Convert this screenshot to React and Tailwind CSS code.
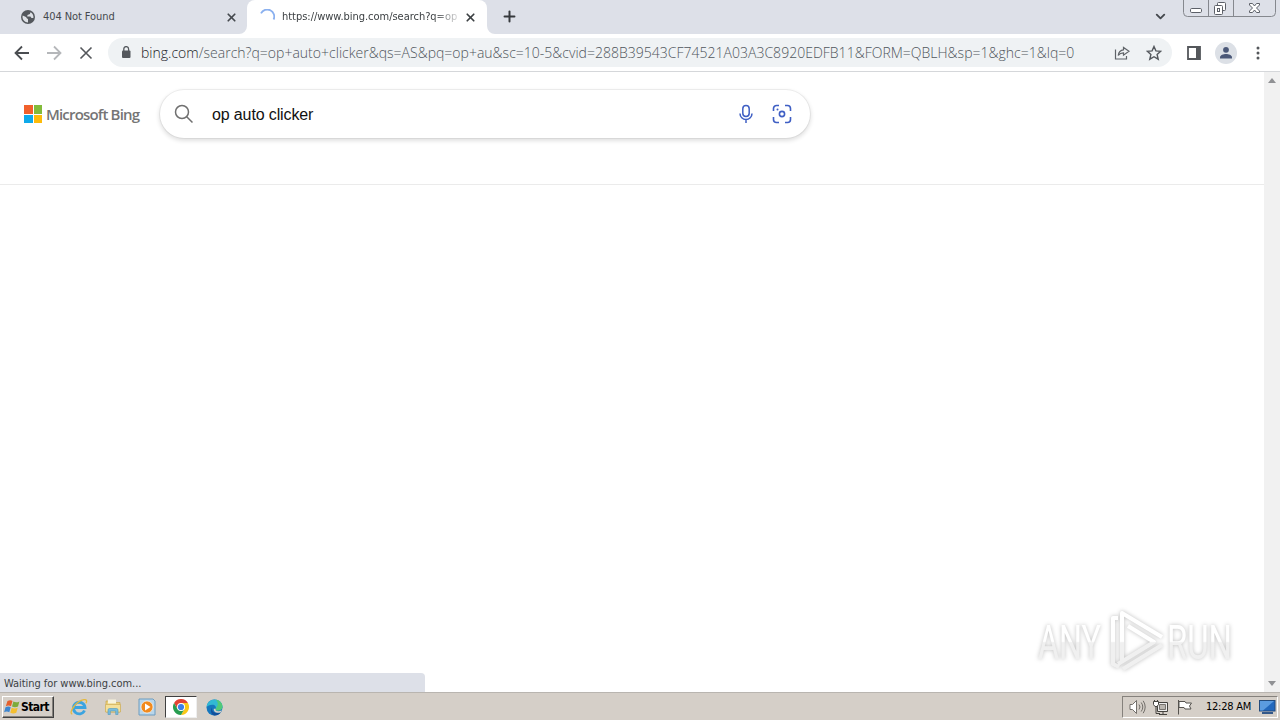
import { ChevronDown, X, Plus } from 'lucide-react';

function Globe() {
  return (
    <svg width="14" height="14" viewBox="0 0 14 14" className="shrink-0">
      <circle cx="7" cy="7" r="7" fill="#54585d" />
      <path d="M1.7 5.5 5 7l1 1.5 1 .6v3.3C4 12.2 1.5 10 1.5 7zM7.2 1.6l2.2.7-.5 1.8-2.4.8-.3 1.6h3.2l1.1 1.5h1.9c.3-2.3-.7-4.2-2.4-5.4z" fill="#dee1e6" />
    </svg>
  );
}

function TabStrip() {
  return (
    <div className="h-[34px] shrink-0 flex bg-[#dde0e8]">
      <div className="w-[247px] shrink-0 flex items-center pl-[21px] pr-[9px] text-[#45494e]">
        <Globe />
        <span className="ml-2 w-[180px] pt-px text-[11px] tracking-[-0.08px] whitespace-nowrap">
          404 Not Found
        </span>
        <X size={13} strokeWidth={3.2} className="ml-[3px] shrink-0" />
      </div>
      <div className="relative w-[240px] shrink-0 flex items-center pl-[12px] pr-[10px] bg-white rounded-t-lg text-[#3c4043]">
        <svg width="8" height="8" className="absolute bottom-0 -left-2">
          <path d="M8 0v8H0a8 8 0 0 0 8-8z" fill="#fff" />
        </svg>
        <svg width="8" height="8" className="absolute bottom-0 -right-2">
          <path d="M0 0v8h8a8 8 0 0 1-8-8z" fill="#fff" />
        </svg>
        <svg width="16" height="16" viewBox="0 0 16 16" fill="none" stroke="#8ab0ef" strokeWidth="1.8" className="shrink-0">
          <path d="M2 4.4A7 7 0 0 1 14.6 10.5" />
        </svg>
        <span className="ml-[7px] w-[176px] shrink-0 overflow-hidden pt-px text-[11px] tracking-[-0.03px] whitespace-nowrap [mask-image:linear-gradient(to_right,black_150px,transparent_182px)]">
          https://www.bing.com/search?q=op
        </span>
        <X size={13} strokeWidth={3.2} className="ml-[6px] shrink-0" />
      </div>
      <Plus size={17} strokeWidth={2.8} className="ml-[14px] mt-[8px] text-[#36393d]" />
      <ChevronDown size={15} strokeWidth={3} className="ml-auto mr-[15px] mt-[9px] text-[#45494e]" />
      <WindowButtons />
    </div>
  );
}

function WindowButtons() {
  return (
    <svg width="93" height="17" viewBox="0 0 93 17" fill="none" className="mr-[4px] shrink-0">
      <path d="M.5 0v12.5q0 4 4 4h84q4 0 4-4V0M25.5 0v16M50.5 0v16" stroke="#85888e" />
      <rect x="7.5" y="8.5" width="11" height="4" rx="1.2" fill="#fff" stroke="#5c6068" />
      <rect x="34.500" y="2.500" width="8" height="8" rx="1" fill="#fff" stroke="#5c6068" />
      <rect x="31.500" y="5.500" width="8" height="9" rx="1" fill="#fff" stroke="#5c6068" />
      <rect x="34.500" y="8.500" width="2" height="3" stroke="#5c6068" />
      <path d="M66.500 3.500h3l2 2.500 2-2.500h3v1.500l-3 3 3 3v1.500h-3l-2-2.500-2 2.500h-3V11l3-3-3-3z" fill="#fff" stroke="#5c6068" />
    </svg>
  );
}

function Toolbar() {
  return (
    <div className="h-[38px] shrink-0 flex items-center bg-white border-b border-[#d5d7da] pl-[14px] text-[#5f6368]">
      <svg width="16" height="16" viewBox="0 0 16 16" fill="none" stroke="#4a4d51" strokeWidth="1.8">
        <path d="M15 8H2M8 1.500 1.500 8 8 14.500" />
      </svg>
      <svg width="16" height="16" viewBox="0 0 16 16" fill="none" stroke="#b5b7ba" strokeWidth="1.8" className="ml-4">
        <path d="M1 8h13M8 1.500 14.500 8 8 14.500" />
      </svg>
      <svg width="16" height="16" viewBox="0 0 16 16" fill="none" stroke="#54575b" strokeWidth="1.600" className="ml-4">
        <path d="m2.500 2.500 11 11M13.500 2.500l-11 11" />
      </svg>
      <div className="ml-[14px] w-[1064px] h-[29px] rounded-full bg-[#eff2f4] flex items-center">
        <svg width="10" height="13" viewBox="0 0 10 13" className="ml-[13px] shrink-0">
          <rect x="1" y="4.500" width="8.500" height="7.500" rx="1" fill="#54585d" />
          <path d="M2.800 5V3a2.400 2.400 0 0 1 4.800 0v2" fill="none" stroke="#54585d" strokeWidth="1.3" />
        </svg>
        <span className="ml-[10px] w-[970px] whitespace-nowrap font-['Open_Sans','Noto_Sans',sans-serif] font-light text-[14px] leading-[20px] tracking-[0.013px] text-[#50565c]">
          <span className="text-[#202124]">bing.com</span>
          /search?q=op+auto+clicker&amp;qs=AS&amp;pq=op+au&amp;sc=10-5&amp;cvid=288B39543CF74521A03A3C8920EDFB11&amp;FORM=QBLH&amp;sp=1&amp;ghc=1&amp;lq=0
        </span>
        <svg width="16" height="16" viewBox="0 0 16 16" fill="none" stroke="#5f6368" strokeWidth="1.200" className="ml-[3px] shrink-0">
          <path d="M1.500 4.500v9.500h11v-3M9.500 2.500v2.300C6.500 5 4.700 7 4.200 10.500c1.500-2 3-2.600 5.300-2.600v2.300L15 6.300z" />
        </svg>
        <svg width="16" height="16" viewBox="0 0 16 16" fill="none" stroke="#54585d" strokeWidth="1.400" className="ml-4 shrink-0">
          <path d="m8 1.500 1.900 4.400 4.800.4-3.600 3.200 1.100 4.700L8 11.700l-4.200 2.500 1.100-4.700-3.600-3.200 4.800-.4z" />
        </svg>
      </div>
      <svg width="14" height="14" viewBox="0 0 14 14" className="ml-[15px] shrink-0">
        <path d="M1 1h12v12H1z" fill="none" stroke="#54575b" strokeWidth="1.800" />
        <path d="M9 1h4v12H9z" fill="#54575b" />
      </svg>
      <svg width="22" height="22" viewBox="0 0 22 22" className="ml-[14px] shrink-0">
        <circle cx="11" cy="11" r="11" fill="#dce0e6" />
        <circle cx="11" cy="7.800" r="2.900" fill="#4b5878" />
        <path d="M5 16.500v-1.200c0-2.200 3.500-3.400 6-3.400s6 1.200 6 3.400v1.200z" fill="#4b5878" />
      </svg>
      <svg width="4" height="14" viewBox="0 0 4 14" fill="#54575b" className="ml-[19px] shrink-0">
        <circle cx="2" cy="2" r="1.500" />
        <circle cx="2" cy="7" r="1.500" />
        <circle cx="2" cy="12" r="1.500" />
      </svg>
    </div>
  );
}

function BingHeader() {
  return (
    <header className="h-[113px] flex items-start border-b border-[#ebebeb] pt-[18px] pl-[24px]">
      <div className="mt-[15px] grid grid-cols-2 gap-px size-[18px]">
        <i className="bg-[#f1602b]" />
        <i className="bg-[#82bb3a]" />
        <i className="bg-[#0fa9ea]" />
        <i className="bg-[#fdbb0a]" />
      </div>
      <span className="mt-[14px] ml-[4px] w-[94px] shrink-0 whitespace-nowrap font-['Open_Sans',sans-serif] font-semibold text-[15px] leading-[20px] tracking-[-0.82px] text-[#757575]">
        Microsoft Bing
      </span>
      <div className="ml-[20px] w-[650px] h-[48px] rounded-full bg-white flex items-center shadow-[0_0_0_1px_rgba(0,0,0,0.05),0_2px_4px_1px_rgba(0,0,0,0.12)]">
        <svg width="20" height="20" viewBox="0 0 20 20" fill="none" stroke="#707070" strokeWidth="1.500" className="ml-[14px]">
          <circle cx="8" cy="8" r="6.500" />
          <path d="m12.700 12.700 5.800 5.800" />
        </svg>
        <span className="ml-[18px] pt-[2px] font-['Liberation_Sans',Arial,sans-serif] text-[16px] tracking-[-0.13px] text-[#111]">
          op auto clicker
        </span>
        <svg width="16" height="20" viewBox="0 0 16 20" fill="none" stroke="#3f5fc4" strokeWidth="1.500" className="ml-auto">
          <rect x="4.800" y="1.500" width="6.400" height="11" rx="3.200" />
          <path d="M2 9.500a6 6 0 0 0 12 0M8 15.500V19" />
        </svg>
        <svg width="20" height="20" viewBox="0 0 20 20" fill="none" stroke="#3f5fc4" strokeWidth="1.600" className="ml-[18px] mr-[18px]">
          <path d="M1.500 7V4.500a3 3 0 0 1 3-3H7M13 1.500h2.500a3 3 0 0 1 3 3V7M18.500 13v2.500a3 3 0 0 1-3 3H13M7 18.500H4.500a3 3 0 0 1-3-3V13" />
          <circle cx="10" cy="10" r="2.600" />
          <circle cx="5.500" cy="5.500" r="1" fill="#3f5fc4" stroke="none" />
        </svg>
      </div>
    </header>
  );
}

function Watermark() {
  return (
    <svg
      width="204"
      height="70"
      viewBox="0 0 204 70"
      className="absolute left-[1034px] bottom-[15px] [filter:drop-shadow(0_0_2px_rgba(0,0,0,0.26))]"
    >
      <defs>
        <linearGradient id="wm" x1="0" y1="0" x2="0" y2="70" gradientUnits="userSpaceOnUse">
          <stop offset=".49" stopColor="#fff" />
          <stop offset=".51" stopColor="#f0f0f0" />
        </linearGradient>
      </defs>
      <g fill="url(#wm)" fontFamily="Roboto, sans-serif" fontSize="49" fontWeight="400">
        <text x="4" y="52" textLength="63" lengthAdjust="spacingAndGlyphs">ANY</text>
        <text x="133" y="52" textLength="65" lengthAdjust="spacingAndGlyphs">RUN</text>
      </g>
      <g fill="none" stroke="url(#wm)" strokeWidth="4" strokeLinejoin="round">
        <path d="M84 11h-5v46l6 3M88 54V6l40 24M94 19l26 16-36 22M89 62l39-24" />
      </g>
    </svg>
  );
}

function ScrollBar() {
  return (
    <div className="w-4 shrink-0 flex flex-col justify-between items-center bg-[#f1f1f1] pt-[6px] pb-[6px]">
      <svg width="8" height="5"><path d="M4 0 8 5H0z" fill="#909194" /></svg>
      <svg width="8" height="5"><path d="M4 5 8 0H0z" fill="#909194" /></svg>
    </div>
  );
}

function WindowsFlag() {
  return (
    <svg width="17" height="16" viewBox="0 0 17 16" className="shrink-0">
      <path d="M3.500 2q3-1.600 5 0L7 7.200q-2.500-1.600-5.200 0z" fill="#e5602c" />
      <path d="M9.400 2.600q3 1.400 6-.2L14 7.600q-3 1.500-6 0z" fill="#7dab3b" />
      <path d="M1.500 8.200q3-1.500 5.200 0l-1.400 5q-2.500-1.500-5.200 0z" fill="#3e86cf" />
      <path d="M7.700 8.700q3 1.400 6 0l-1.400 5q-3 1.500-6 0z" fill="#f4bf30" />
    </svg>
  );
}

function Taskbar() {
  return (
    <div className="h-7 shrink-0 flex items-center bg-[#d5cfc8] border-t border-[#b9b5b0] pt-px text-black">
      <div className="ml-[2px] w-[52px] h-[22px] flex items-center pl-[1px] bg-[#d5cfc8] border border-t-white border-l-white border-r-[#404040] border-b-[#404040] shadow-[inset_-1px_-1px_0_#85817c]">
        <WindowsFlag />
        <span className="font-bold text-[12px] tracking-[-0.55px]">Start</span>
      </div>
      {/* internet explorer */}
      <svg width="18" height="18" viewBox="0 0 18 18" fill="none" className="ml-[16px]">
        <path d="M14.500 12.500A5.800 5.800 0 1 1 15 9.500H5" stroke="#3ba4e0" strokeWidth="2.800" />
        <path d="M2.300 16.200C-2 15 6 3 14 1.700c3-.5 3 1.500 2 3.500" stroke="#e5b93d" strokeWidth="1.300" />
      </svg>
      {/* file explorer */}
      <svg width="18" height="18" viewBox="0 0 18 18" className="ml-[16px]">
        <path d="M2 3h5l1 1.500h8V14H2z" fill="#ead07a" stroke="#c9a750" strokeWidth=".7" />
        <path d="M4 1.500h8v4H4z" fill="#f7f3dd" />
        <path d="M1.500 6.500h15V14h-15z" fill="#f4e09a" stroke="#c9a750" strokeWidth=".6" />
        <path d="M4 16.500V12q0-1.500 1.500-1.500h7Q14 10.500 14 12v4.500h-2.300V13H6.300v3.500z" fill="#79bddd" stroke="#4e97bd" strokeWidth=".6" />
      </svg>
      {/* media player */}
      <svg width="18" height="18" viewBox="0 0 18 18" className="ml-[16px]">
        <path d="M1 1h14l2 2v14H1z" fill="#b9d6ea" stroke="#6d9cc0" />
        <circle cx="9" cy="9" r="6" fill="#f18a1d" stroke="#fff" strokeWidth=".6" />
        <path d="m7 5.500 5.500 3.500L7 12.500z" fill="#fff" />
      </svg>
      <div className="ml-[9px] w-[32px] h-[22px] flex items-center justify-center bg-white border border-t-[#404040] border-l-[#404040] border-r-[#eee] border-b-[#eee]">
        <svg width="16" height="16" viewBox="0 0 16 16">
          <path d="M1.070 4A8 8 0 0 1 14.930 4H8L4.540 10z" fill="#e24334" />
          <path d="M14.930 4A8 8 0 0 1 8 16l3.460-6L8 4z" fill="#f9c717" />
          <path d="M8 16A8 8 0 0 1 1.070 4l3.470 6h6.920z" fill="#279d50" />
          <circle cx="8" cy="8" r="4" fill="#fff" />
          <circle cx="8" cy="8" r="3.100" fill="#3c7fe8" />
        </svg>
      </div>
      <svg width="17" height="17" viewBox="0 0 17 17" className="ml-[9px]">
        <circle cx="8.500" cy="8.500" r="8" fill="#1677bd" />
        <path d="M.6 8C1 3.500 4.400.5 8.500.5c5 0 8 3.700 8 7 0 2.500-2 4-4.500 4-2 0-2.800-.8-2.300-1.600C10.500 8 9 5.800 6.300 5.800 3.500 5.800 1.500 7 .6 8z" fill="#32b9d4" />
        <path d="M10 .7c4 .6 6.500 3.700 6.500 6.800 0 2.500-2 4-4.500 4-2 0-2.800-.8-2.300-1.600C11 7.500 13.500 4.500 10 .7z" fill="#52c978" />
        <path d="M6 8.500c-1 4 2.500 6.500 8.700 4.800-1.500 2.400-4 3.400-6.500 3.200C5 15.500 4 11 6 8.500z" fill="#12509c" />
        <path d="M9.800 9.800c-1.200 1.700 2 3.500 6 1.500l-1 2c-4 1.500-7.500-.3-7-3.500z" fill="#d5cfc8" />
      </svg>
      <div className="ml-auto mr-[2px] w-[156px] h-[22px] flex items-center pl-[6px] border border-t-[#85817c] border-l-[#85817c] border-r-white border-b-white">
        <svg width="17" height="16" viewBox="0 0 17 16" fill="#fff" stroke="#65625e" strokeWidth=".9" className="shrink-0">
          <path d="M1 5.500h2.500l4-4v13l-4-4H1z" />
          <path d="M10 5.500q2 2.500 0 5M12.200 3.500q3.200 4.500 0 9M14.200 1.800q4 6.200 0 12.400" fill="none" />
        </svg>
        <svg width="17" height="17" viewBox="0 0 17 17" fill="none" stroke="#45433f" className="ml-[6px] shrink-0">
          <path d="M5.500 3.500h10v9h-10z" fill="#eee" />
          <path d="M7.500 5.500h6v5h-6z" fill="#bab6b0" stroke="#77736e" />
          <path d="M7 15.500h8M11 13v2M4 7.500v7h4" />
          <path d="M1.500 2.500h5v3l-1.500 2H3l-1.500-2zM2.500 1v1.500M5.500 1v1.500" fill="#fff" />
        </svg>
        <svg width="17" height="16" viewBox="0 0 17 16" fill="#fff" stroke="#55524e" strokeWidth="1" className="ml-[7px] shrink-0">
          <path d="M2.500 1v14.500" />
          <path d="M3 2.500h6l1 1.500h5.500l-2 3 1.500 3H9l-1-1.500H3z" />
        </svg>
        <span className="ml-[13px] pt-px w-[48px] shrink-0 text-[11px] tracking-[-0.25px] whitespace-nowrap">12:28 AM</span>
        <svg width="17" height="16" viewBox="0 0 17 16" className="ml-[5px] shrink-0">
          <rect x=".5" y="1.500" width="15.500" height="10.500" fill="#2368bd" stroke="#244b7c" />
          <path d="M1 2h14L4 11.500H1z" fill="#5b9be0" />
          <path d="M3 14h11" stroke="#34598a" strokeWidth="2" />
        </svg>
      </div>
    </div>
  );
}

export default function App() {
  return (
    <div className="w-[1280px] h-[720px] flex flex-col overflow-hidden bg-white font-['DejaVu_Sans_Condensed','DejaVu_Sans',sans-serif]">
      <TabStrip />
      <Toolbar />
      <main className="relative flex-1 min-h-0 flex">
        <div className="flex-1">
          <BingHeader />
        </div>
        <ScrollBar />
        <Watermark />
        <div className="absolute left-0 bottom-0 w-[425px] h-[19px] flex items-center pl-[4px] pt-[3px] rounded-tr bg-[#dde0e8] text-[11px] tracking-[-0.05px] text-[#3c4043]">
          Waiting for www.bing.com...
        </div>
      </main>
      <Taskbar />
    </div>
  );
}
